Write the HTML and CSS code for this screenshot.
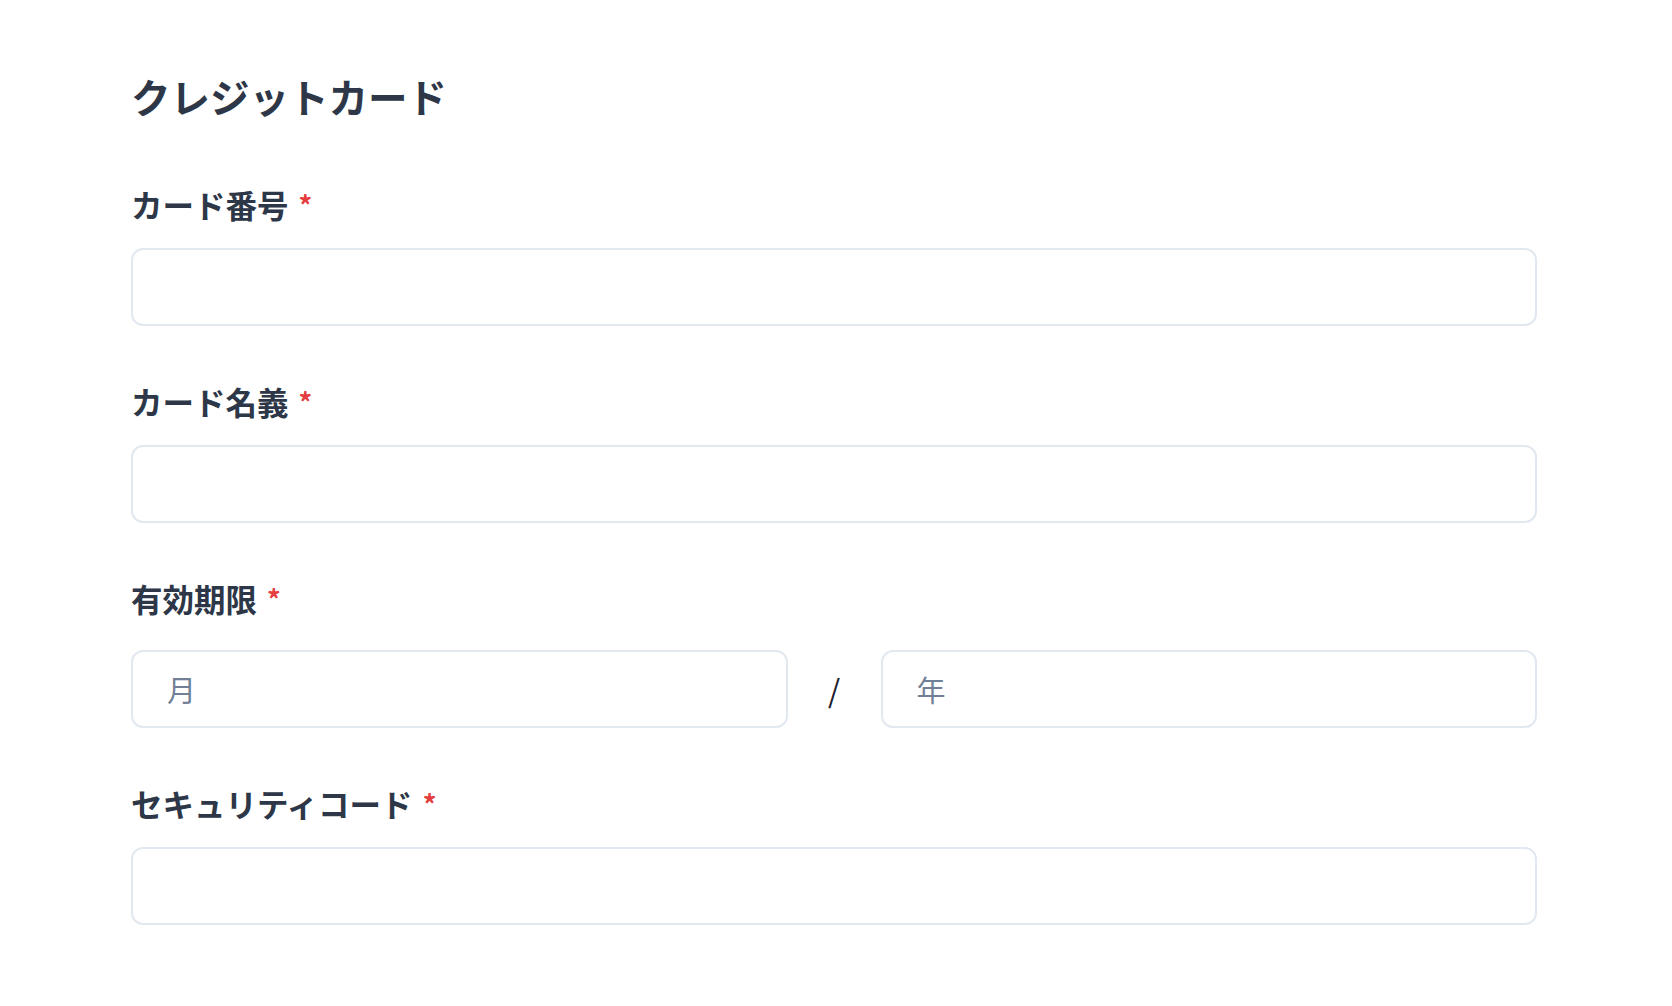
FILE: index.html
```html
<!DOCTYPE html>
<html lang="ja">
<head>
    <meta charset="UTF-8">
    <meta name="viewport" content="width=device-width, initial-scale=1.0">
    <title>クレジットカード</title>
    <link rel="stylesheet" href="styles.css">
</head>
<body>
    <form class="card-form" id="cardForm">
        <h1 class="title">クレジットカード</h1>

        <div class="field">
            <label class="label" for="cardNumber">カード番号<span class="required">*</span></label>
            <input type="text" class="text-input" id="cardNumber">
        </div>

        <div class="field">
            <label class="label" for="cardName">カード名義<span class="required">*</span></label>
            <input type="text" class="text-input" id="cardName">
        </div>

        <div class="field">
            <div class="label label-date">有効期限<span class="required">*</span></div>
            <div class="date-row">
                <input type="text" class="text-input" placeholder="月" id="expMonth">
                <span class="slash">/</span>
                <input type="text" class="text-input" placeholder="年" id="expYear">
            </div>
        </div>

        <div class="field">
            <label class="label" for="cvc">セキュリティコード<span class="required">*</span></label>
            <input type="text" class="text-input" id="cvc">
        </div>
    </form>
</body>
</html>
```

FILE: styles.css
```css
body {
    margin: 0;
    padding: 0;
    background-color: #fff;
    font-family: "Noto Sans CJK JP", "Noto Sans", sans-serif;
    color: #2d3748;
}

.card-form {
    width: 1406px;
    margin-left: 131px;
    padding-top: 70px;
    display: flex;
    flex-direction: column;
    gap: 53px;
}

.title {
    margin: 0 0 7px 0;
    font-size: 39.5px;
    line-height: 52px;
    font-weight: 700;
}

.field {
    display: flex;
    flex-direction: column;
}

.label {
    display: block;
    font-size: 31.5px;
    line-height: 44px;
    font-weight: 700;
    margin-bottom: 21px;
}

.label-date {
    margin-bottom: 29px;
}

.required {
    color: #e53e3e;
    font-size: 27px;
    font-weight: 700;
    margin-left: 10px;
    vertical-align: 2px;
}

.text-input {
    box-sizing: border-box;
    width: 100%;
    height: 78px;
    padding: 0 34px;
    border: 2px solid #e2e8f0;
    border-radius: 12px;
    font-family: inherit;
    font-size: 29px;
    color: #2d3748;
    background-color: #fff;
    outline: none;
}

.text-input::placeholder {
    color: #718096;
}

.date-row {
    display: grid;
    grid-template-columns: 1fr 93px 1fr;
    align-items: center;
}

.slash {
    text-align: center;
    font-size: 31px;
    color: #1a202c;
    line-height: 1;
}
```
